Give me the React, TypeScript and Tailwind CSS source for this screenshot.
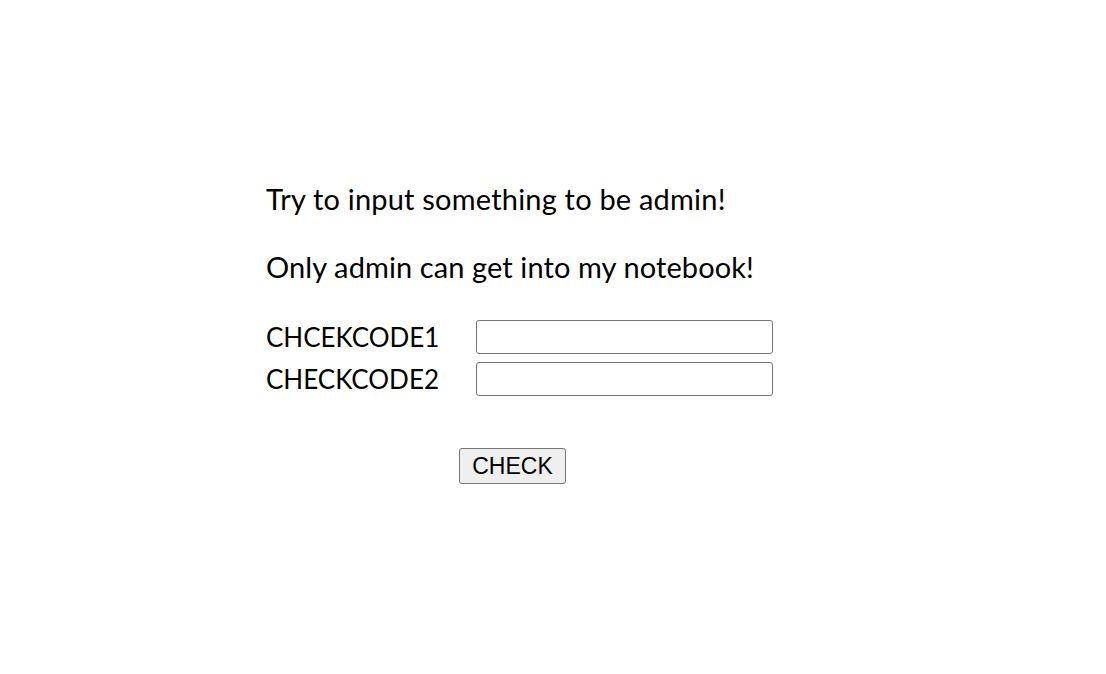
import React from "react";

export default function App() {
  return (
    <div className="w-[1106px] h-[674px] bg-white text-black">
      <div className="pl-[266px] pt-[179px] flex flex-col" style={{ fontFamily: "Lato, 'Noto Sans', sans-serif" }}>
        <p className="text-[29px] leading-[40px] m-0 tracking-[0.2px]">Try to input something to be admin!</p>
        <p className="text-[29px] leading-[40px] mt-[28px] tracking-[0.1px]">Only admin can get into my notebook!</p>
        <div className="mt-[33px] flex items-center h-[34px]">
          <span className="text-[26px] w-[210px]">CHCEKCODE1</span>
          <input className="w-[297px] h-[34px] border border-[#767676] rounded-[3px] bg-white" />
        </div>
        <div className="mt-[8px] flex items-center h-[34px]">
          <span className="text-[26px] w-[210px]">CHECKCODE2</span>
          <input className="w-[297px] h-[34px] border border-[#767676] rounded-[3px] bg-white" />
        </div>
        <div className="mt-[52px] pl-[193px]">
          <button
            className="w-[107px] h-[36px] border border-[#767676] rounded-[3px] bg-[#efefef] text-[23px] leading-none"
            style={{ fontFamily: "'Liberation Sans', Arial, sans-serif" }}
          >
            CHECK
          </button>
        </div>
      </div>
    </div>
  );
}
